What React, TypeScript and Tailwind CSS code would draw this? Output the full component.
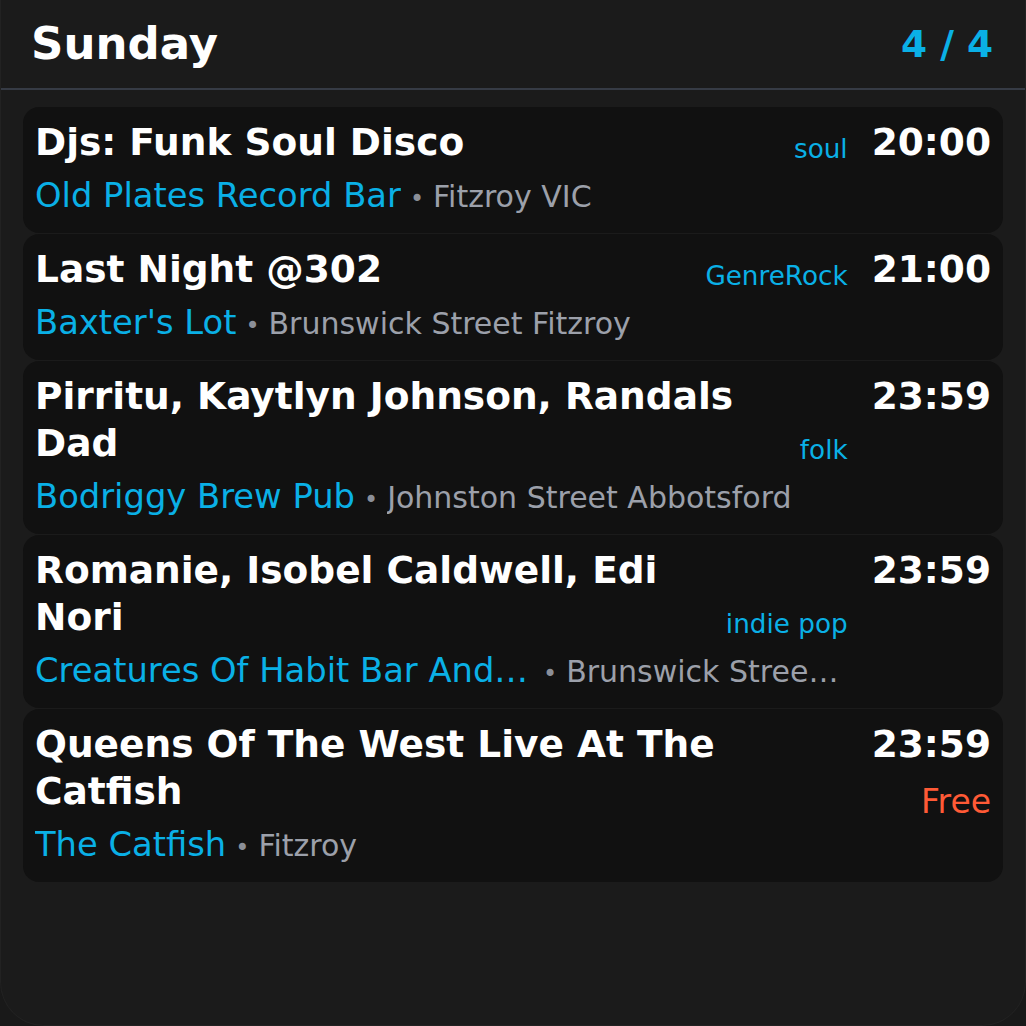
import React from "react";

type Gig = {
  title: string;
  genre?: string;
  time: string;
  venue: string;
  location: string;
  price?: string;
};

const gigs: Gig[] = [
  { title: "Djs: Funk Soul Disco", genre: "soul", time: "20:00", venue: "Old Plates Record Bar", location: "Fitzroy VIC" },
  { title: "Last Night @302", genre: "GenreRock", time: "21:00", venue: "Baxter's Lot", location: "Brunswick Street Fitzroy" },
  { title: "Pirritu, Kaytlyn Johnson, Randals Dad", genre: "folk", time: "23:59", venue: "Bodriggy Brew Pub", location: "Johnston Street Abbotsford" },
  { title: "Romanie, Isobel Caldwell, Edi Nori", genre: "indie pop", time: "23:59", venue: "Creatures Of Habit Bar And Kitchen", location: "Brunswick Street Fitzroy" },
  { title: "Queens Of The West Live At The Catfish", time: "23:59", venue: "The Catfish", location: "Fitzroy", price: "Free" },
];

function GigCard({ gig }: { gig: Gig }) {
  return (
    <div className="flex gap-[24px] rounded-[16px] bg-[#111111] pl-[12px] pr-[12px] pt-[12px] pb-[16px]">
      <div className="flex min-w-0 flex-1 flex-col">
        <div className="flex gap-[24px]">
          <h3 className="min-w-0 flex-1 text-[37.5px] font-bold leading-[1.25] text-white">{gig.title}</h3>
          {gig.genre && (
            <span className="shrink-0 self-end text-[26.25px] leading-[1.25] text-[#0ab0e6]">{gig.genre}</span>
          )}
        </div>
        <div className="mt-[9px] flex min-w-0 items-baseline text-[33.75px] leading-[1.25]">
          <span className="max-w-[499px] shrink-0 truncate text-[#0ab0e6]">{gig.venue}</span>
          <span className="shrink-0 px-[9px] text-[24px] text-[#8b8f98]">•</span>
          <span className="min-w-0 truncate text-[30px] text-[#9ca0aa]">{gig.location}</span>
        </div>
      </div>
      <div className="flex shrink-0 flex-col items-end">
        <span className="text-[37.5px] font-bold leading-[1.25] text-white">{gig.time}</span>
        {gig.price && <span className="mt-[13px] text-[33px] leading-[1.25] text-[#ff5a36]">{gig.price}</span>}
      </div>
    </div>
  );
}

export default function App() {
  return (
    <div className="h-[1026px] w-[1026px] bg-[#191919] font-['DejaVu_Sans',sans-serif]">
      <div className="flex h-full flex-col rounded-b-[44px] border-x border-b border-[#222222] bg-[#1b1b1b]">
        <header className="flex h-[90px] shrink-0 items-center justify-between border-b-2 border-[#363b45] pl-[30px] pr-[32px]">
          <h1 className="text-[45px] font-bold text-white">Sunday</h1>
          <span className="text-[37.5px] font-bold text-[#0ab0e6]">4 / 4</span>
        </header>
        <div className="flex flex-col gap-px px-[22px] pt-[17px]">
          {gigs.map((g, i) => (
            <GigCard key={i} gig={g} />
          ))}
        </div>
      </div>
    </div>
  );
}
